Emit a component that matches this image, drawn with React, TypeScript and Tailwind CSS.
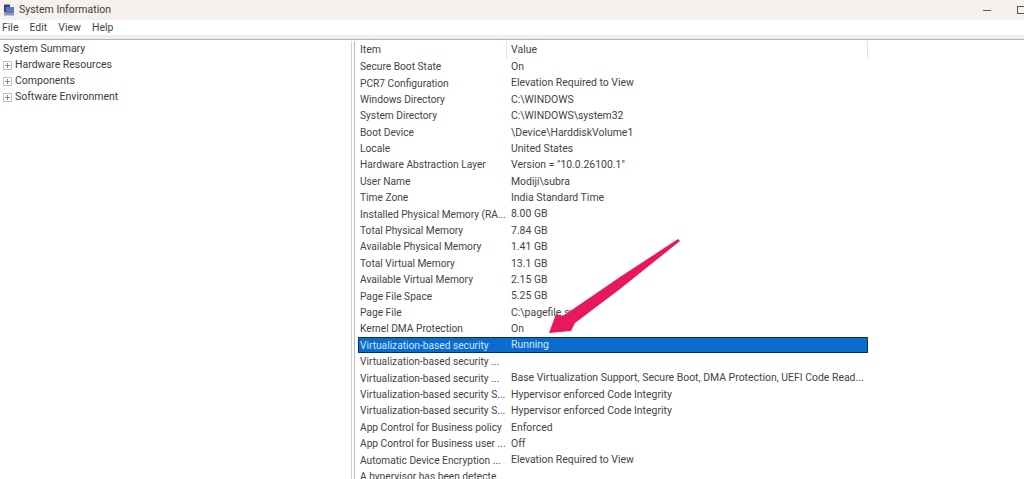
const rows = [
  ["Secure Boot State", "On"],
  ["PCR7 Configuration", "Elevation Required to View"],
  ["Windows Directory", "C:\\WINDOWS"],
  ["System Directory", "C:\\WINDOWS\\system32"],
  ["Boot Device", "\\Device\\HarddiskVolume1"],
  ["Locale", "United States"],
  ["Hardware Abstraction Layer", "Version = \"10.0.26100.1\""],
  ["User Name", "Modiji\\subra"],
  ["Time Zone", "India Standard Time"],
  ["Installed Physical Memory (RA...", "8.00 GB"],
  ["Total Physical Memory", "7.84 GB"],
  ["Available Physical Memory", "1.41 GB"],
  ["Total Virtual Memory", "13.1 GB"],
  ["Available Virtual Memory", "2.15 GB"],
  ["Page File Space", "5.25 GB"],
  ["Page File", "C:\\pagefile.sys"],
  ["Kernel DMA Protection", "On"],
  ["Virtualization-based security", "Running"],
  ["Virtualization-based security ...", ""],
  ["Virtualization-based security ...", "Base Virtualization Support, Secure Boot, DMA Protection, UEFI Code Read..."],
  ["Virtualization-based security S...", "Hypervisor enforced Code Integrity"],
  ["Virtualization-based security S...", "Hypervisor enforced Code Integrity"],
  ["App Control for Business policy", "Enforced"],
  ["App Control for Business user ...", "Off"],
  ["Automatic Device Encryption ...", "Elevation Required to View"],
  ["A hypervisor has been detecte...", ""],
];

function Expander() {
  return (
    <svg width="9" height="9" viewBox="0 0 9 9" className="shrink-0">
      <rect x="0.5" y="0.5" width="8" height="8" fill="#fff" stroke="#c4c4c4" />
      <path d="M2 4.5H7M4.5 2V7" stroke="#8a8a8a" />
    </svg>
  );
}

function TreeItem({ label }: { label: string }) {
  return (
    <div className="flex h-4 items-center gap-[3px] pl-[3px]">
      <Expander />
      <span>{label}</span>
    </div>
  );
}

export default function App() {
  return (
    <div className="relative flex h-[479px] w-[1024px] flex-col overflow-hidden bg-white font-['Roboto',sans-serif] text-[10.5px] text-[#444]">
      {/* Title bar */}
      <div className="flex h-[20px] items-center bg-[#f6f1ec] pl-[3px]">
        <svg width="12" height="12" viewBox="0 0 12 12" className="shrink-0">
          <rect x="1" y="0.5" width="6" height="8" fill="#34427e" />
          <rect x="3" y="3" width="8" height="6" fill="#5f78bd" />
          <rect x="1" y="9" width="10" height="2.5" fill="#8d97b8" />
        </svg>
        <span className="ml-[4px] text-[#3c3c3c]">System Information</span>
        <div className="ml-auto flex items-center gap-[26px]">
          <div className="h-px w-[8px] bg-[#555]" />
          <div className="h-[8px] w-[7px] rounded-l-[1px] border-y border-l border-[#555]" />
        </div>
      </div>

      {/* Menu */}
      <div className="flex h-[15px] items-center gap-[11px] pl-[2px]">
        <span>File</span>
        <span>Edit</span>
        <span>View</span>
        <span>Help</span>
      </div>
      <div className="h-[5px] border-b border-[#b4b4b4] bg-[#f0f0f0]" />

      <div className="flex min-h-0 flex-1 pt-px">
        {/* Tree */}
        <div className="w-[352px] shrink-0 border-r border-[#d4d4d4] text-[#3c3c3c]">
          <div className="flex h-4 items-center pl-[3px]">System Summary</div>
          <TreeItem label="Hardware Resources" />
          <TreeItem label="Components" />
          <TreeItem label="Software Environment" />
        </div>

        {/* List */}
        <div className="ml-[2px] flex-1 border-l border-[#b9b9b9] pl-[3px]">
          <div className="flex h-[17.6px] w-[510px] items-center">
            <div className="h-full w-[149px] border-r border-[#e3e3e3] pl-[2px] leading-[18px]">Item</div>
            <div className="h-full w-[361px] border-r border-[#e3e3e3] pl-[4px] leading-[18px]">Value</div>
          </div>
          {rows.map(([item, value], i) => {
            const selected = i === 17;
            return (
              <div
                key={i}
                className={
                  selected
                    ? "box-border flex h-[16px] mb-[0.4px] w-[510px] items-center border border-[#0f2f52] bg-[#0a6ccc] text-[#cfe6fb]"
                    : "flex h-[16.4px] w-[510px] items-center"
                }
              >
                <div className={selected ? "w-[148px] shrink-0 whitespace-nowrap pl-[1px] text-[10.2px]" : "w-[149px] shrink-0 whitespace-nowrap pl-[2px] text-[10.2px]"}>{item}</div>
                <div className="whitespace-nowrap pl-[4px] text-[10.45px]">{value}</div>
              </div>
            );
          })}
        </div>
      </div>

      {/* Annotation arrow */}
      <svg className="absolute left-0 top-0" width="1024" height="479" viewBox="0 0 1024 479">
        <polygon points="680,241 620,289 575,323 571,331 549,333 556,314 563,316 620,277 678,239" fill="#e8185c" />
      </svg>
    </div>
  );
}
